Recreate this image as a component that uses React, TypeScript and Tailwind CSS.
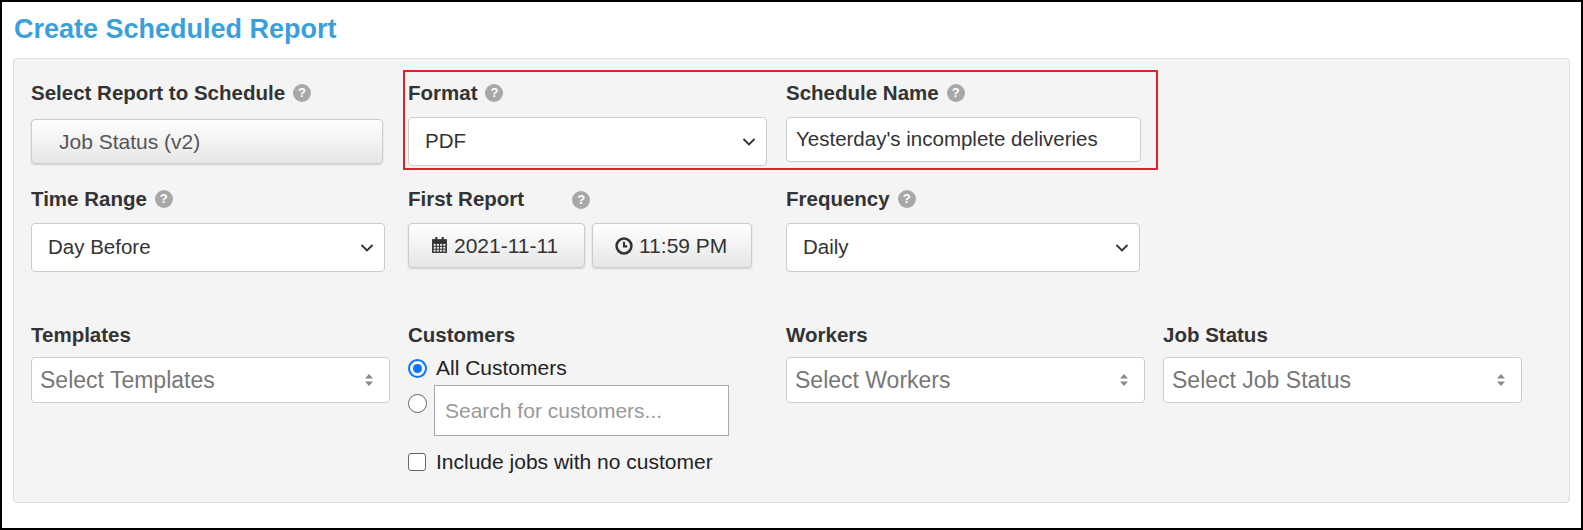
import React from "react";

const Help = () => (
  <span className="inline-flex items-center justify-center w-[18px] h-[18px] rounded-full bg-[#a8a8a8] text-white text-[13px] font-bold ml-2 align-middle">?</span>
);
const Chevron = () => (
  <svg width="14" height="9" viewBox="0 0 14 9" className="absolute right-[10px] top-1/2 -translate-y-1/2"><path d="M1.5 1.5 L7 7 L12.5 1.5" fill="none" stroke="#333" strokeWidth="1.8" /></svg>
);
const UpDown = () => (
  <svg width="8" height="12" viewBox="0 0 8 12" className="absolute right-[16px] top-1/2 -translate-y-1/2"><path d="M4 0 L8 4.5 H0Z M4 12 L8 7.5 H0Z" fill="#888" /></svg>
);
const Label = ({ children }: { children: React.ReactNode }) => (
  <div className="text-[20.5px] font-bold text-[#333] h-[26px] flex items-center">{children}</div>
);
const Sel = ({ text, w }: { text: string; w: string }) => (
  <div className={`relative ${w} h-[49px] bg-white border border-[#ccc] rounded-[4px] flex items-center px-[16px] text-[20.5px] text-[#333]`}>{text}<Chevron /></div>
);
const Multi = ({ text }: { text: string }) => (
  <div className="relative w-[359px] h-[46px] bg-white border border-[#ccc] rounded-[4px] flex items-center px-[8px] text-[23px] text-[#777]">{text}<UpDown /></div>
);
const Btn = ({ children, w }: { children: React.ReactNode; w: string }) => (
  <div className={`${w} h-[45px] rounded-[4px] border border-[#ccc] bg-gradient-to-b from-white to-[#e6e6e6] shadow-[0_1px_2px_rgba(0,0,0,0.15)] flex items-center text-[21px] text-[#333]`}>{children}</div>
);

export default function App() {
  return (
    <div className="w-[1583px] h-[530px] border-2 border-black bg-white relative" style={{ fontFamily: '"Liberation Sans", Arial, sans-serif' }}>
      <div className="px-[12px] pt-[7px] text-[27px] font-bold text-[#3aa0dc] h-[56px]">Create Scheduled Report</div>
      <div className="mx-[11px] h-[445px] bg-[#f4f4f4] border border-[#ddd] rounded-[4px] pl-[17px] pt-[21px]">
        <div className="flex">
          <div className="w-[377px]">
            <Label>Select Report to Schedule <Help /></Label>
            <div className="mt-[13px]"><Btn w="w-[352px]"><span className="pl-[27px] text-[#555]">Job Status (v2)</span></Btn></div>
          </div>
          <div className="w-[378px]">
            <Label>Format <Help /></Label>
            <div className="mt-[11px]"><Sel text="PDF" w="w-[359px]" /></div>
          </div>
          <div className="w-[377px]">
            <Label>Schedule Name <Help /></Label>
            <div className="mt-[11px] w-[355px] h-[45px] bg-white border border-[#ccc] rounded-[4px] flex items-center px-[9px] text-[20.5px] text-[#333]">Yesterday's incomplete deliveries</div>
          </div>
        </div>
        <div className="flex mt-[20px]">
          <div className="w-[377px]">
            <Label>Time Range <Help /></Label>
            <div className="mt-[11px]"><Sel text="Day Before" w="w-[354px]" /></div>
          </div>
          <div className="w-[378px]">
            <Label>First Report<span className="ml-[40px]"><Help /></span></Label>
            <div className="mt-[11px] flex gap-[7px]">
              <Btn w="w-[177px]">
                <span className="flex items-center gap-[6px] pl-[22px]">
                  <svg width="17" height="17" viewBox="0 0 16 16"><rect x="1" y="2" width="14" height="13" fill="#333" /><rect x="4" y="0" width="2" height="4" fill="#333" /><rect x="10" y="0" width="2" height="4" fill="#333" />{[0,1,2].map(r=>[0,1,2,3].map(c=><rect key={r+"-"+c} x={2.5+c*3} y={6.5+r*2.7} width="2" height="1.8" fill="#e8e8e8" />))}</svg>
                  2021-11-11</span>
              </Btn>
              <Btn w="w-[160px]">
                <span className="flex items-center gap-[6px] pl-[22px]">
                  <svg width="18" height="18" viewBox="0 0 17 17"><circle cx="8.5" cy="8.5" r="7" fill="none" stroke="#333" strokeWidth="2.4" /><path d="M8.5 4.5 V8.8 H11.5" fill="none" stroke="#333" strokeWidth="2" /></svg>
                  11:59 PM</span>
              </Btn>
            </div>
          </div>
          <div className="w-[377px]">
            <Label>Frequency <Help /></Label>
            <div className="mt-[11px]"><Sel text="Daily" w="w-[354px]" /></div>
          </div>
        </div>
        <div className="flex mt-[50px]">
          <div className="w-[377px]">
            <Label>Templates</Label>
            <div className="mt-[9px]"><Multi text="Select Templates" /></div>
          </div>
          <div className="w-[378px]">
            <Label>Customers</Label>
            <div className="mt-[7px] flex items-center gap-[9px] h-[26px]">
              <span className="w-[19px] h-[19px] rounded-full border-2 border-[#0a75ff] flex items-center justify-center"><span className="w-[9px] h-[9px] rounded-full bg-[#0a75ff]" /></span>
              <span className="text-[21px] text-[#222]">All Customers</span>
            </div>
            <div className="mt-[4px] flex items-start gap-[7px]">
              <span className="mt-[9px] w-[19px] h-[19px] rounded-full border border-[#666] bg-white" />
              <div className="w-[295px] h-[51px] bg-white border border-[#aaa] flex items-center px-[10px] text-[21px] text-[#999]">Search for customers...</div>
            </div>
            <div className="mt-[10px] flex items-center gap-[10px]">
              <span className="w-[18px] h-[18px] rounded-[3px] border border-[#666] bg-white" />
              <span className="text-[21px] text-[#222]">Include jobs with no customer</span>
            </div>
          </div>
          <div className="w-[377px]">
            <Label>Workers</Label>
            <div className="mt-[9px]"><Multi text="Select Workers" /></div>
          </div>
          <div className="w-[377px]">
            <Label>Job Status</Label>
            <div className="mt-[9px]"><Multi text="Select Job Status" /></div>
          </div>
        </div>
      </div>
      <div className="absolute left-[401px] top-[68px] w-[755px] h-[100px] border-2 border-[#e0202a] pointer-events-none" />
    </div>
  );
}
